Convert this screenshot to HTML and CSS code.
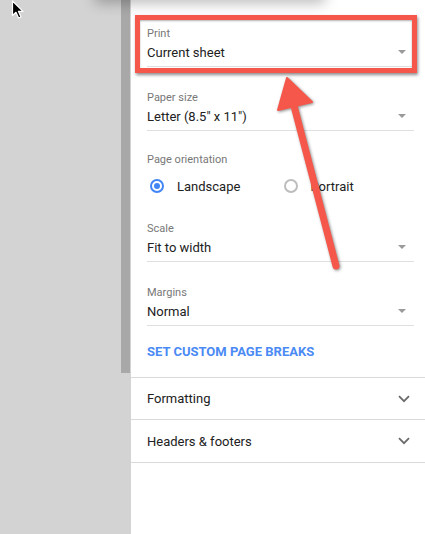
FILE: index.html
```html
<!DOCTYPE html>
<html>
<head>
<meta charset="utf-8">
<link rel="stylesheet" href="styles.css">
</head>
<body>
<div class="screen">
  <div class="sidebar">
    <svg class="cursor" width="14" height="20" viewBox="0 0 14 20"><path d="M1.5 1 L1.5 15.5 L5 12.3 L7.6 18 L10 17 L7.5 11.4 L12 11.4 Z" fill="#000" stroke="#fff" stroke-width="1.2" stroke-linejoin="round"/></svg>
  </div>
  <div class="scrollbar"><div class="thumb"></div></div>
  <main class="panel">
    <div class="options">
      <div class="field">
        <div class="label">Print</div>
        <div class="select"><span>Current sheet</span><span class="caret"></span></div>
      </div>
      <div class="field">
        <div class="label">Paper size</div>
        <div class="select"><span>Letter (8.5" x 11")</span><span class="caret"></span></div>
      </div>
      <div class="field orientation">
        <div class="label">Page orientation</div>
        <div class="radios">
          <label class="radio"><span class="dot checked"></span>Landscape</label>
          <label class="radio"><span class="dot"></span>Portrait</label>
        </div>
      </div>
      <div class="field">
        <div class="label">Scale</div>
        <div class="select"><span>Fit to width</span><span class="caret"></span></div>
      </div>
      <div class="field">
        <div class="label">Margins</div>
        <div class="select"><span>Normal</span><span class="caret"></span></div>
      </div>
      <a class="link">SET CUSTOM PAGE BREAKS</a>
    </div>
    <div class="section"><span>Formatting</span><svg class="chev" width="12" height="8" viewBox="0 0 12 8"><path d="M1 1.2 L6 6.2 L11 1.2" fill="none" stroke="#6b6b6b" stroke-width="1.8"/></svg></div>
    <div class="section"><span>Headers &amp; footers</span><svg class="chev" width="12" height="8" viewBox="0 0 12 8"><path d="M1 1.2 L6 6.2 L11 1.2" fill="none" stroke="#6b6b6b" stroke-width="1.8"/></svg></div>
  </main>
  <div class="card-shadow"></div>
  <div class="highlight"></div>
  <svg class="arrow" width="425" height="534" viewBox="0 0 425 534">
    <line x1="336" y1="266" x2="293" y2="102" stroke="#f5574a" stroke-width="7" stroke-linecap="round"/>
    <polygon points="287,78 312,102 278,110" fill="#f5574a" stroke="#f5574a" stroke-width="2" stroke-linejoin="round"/>
  </svg>
</div>
</body>
</html>
```

FILE: styles.css
```css
html, body {
  margin: 0;
  padding: 0;
}
body {
  width: 425px;
  height: 534px;
  overflow: hidden;
  font-family: Roboto, "Liberation Sans", Arial, sans-serif;
  background: #d3d3d3;
}
.screen {
  position: relative;
  display: flex;
  width: 425px;
  height: 534px;
  overflow: hidden;
}
.sidebar {
  width: 121px;
  flex: none;
  background: #d3d3d3;
}
.cursor {
  display: block;
  margin: 0 0 0 11px;
}
.scrollbar {
  width: 10px;
  flex: none;
  background: #d3d3d3;
}
.thumb {
  width: 9px;
  height: 373px;
  background: #a8a8a8;
}
.panel {
  flex: 1;
  min-width: 0;
  background: #fff;
  display: flex;
  flex-direction: column;
}
.options {
  padding: 27px 11px 0 16px;
}
.field {
  margin-bottom: 24px;
}
.field.orientation {
  margin-top: -2px;
  margin-bottom: 26px;
}
.label {
  font-size: 11px;
  line-height: 14px;
  color: #777;
}
.select {
  margin-top: 1px;
  height: 20px;
  padding-bottom: 4px;
  border-bottom: 1px solid #e0e0e0;
  display: flex;
  align-items: center;
  justify-content: space-between;
  font-size: 13px;
  color: #212121;
}
.caret {
  width: 0;
  height: 0;
  border-left: 4px solid transparent;
  border-right: 4px solid transparent;
  border-top: 4px solid #9a9a9a;
  margin-right: 8px;
}
.radios {
  display: flex;
  margin-top: 9px;
  height: 20px;
}
.radio {
  width: 135px;
  display: flex;
  align-items: center;
  font-size: 13px;
  color: #212121;
}
.dot {
  box-sizing: border-box;
  width: 14px;
  height: 14px;
  margin: 0 13px 0 3px;
  border: 2px solid #bdbdbd;
  border-radius: 50%;
  display: flex;
  align-items: center;
  justify-content: center;
}
.dot.checked {
  border-color: #4285f4;
}
.dot.checked::after {
  content: "";
  width: 6px;
  height: 6px;
  border-radius: 50%;
  background: #4285f4;
}
.link {
  display: block;
  margin-top: -8px;
  line-height: 20px;
  padding-bottom: 15px;
  font-size: 13px;
  font-weight: 700;
  color: #4a8af4;
}
.section {
  height: 41px;
  border-top: 1px solid #dadada;
  display: flex;
  align-items: center;
  justify-content: space-between;
  padding: 0 15px 0 16px;
  font-size: 13px;
  color: #212121;
}
.section + .section {
  height: 42px;
  border-bottom: 1px solid #dadada;
}
.chev {
  display: block;
}
.card-shadow {
  position: absolute;
  left: 95px;
  top: -40px;
  width: 230px;
  height: 40px;
  background: #fff;
  box-shadow: 0 3px 14px rgba(0, 0, 0, 0.28);
}
.highlight {
  position: absolute;
  left: 135px;
  top: 15px;
  width: 272px;
  height: 48px;
  border: 5px solid #f5574a;
  box-shadow: 1px 2px 3px rgba(0, 0, 0, 0.45), inset 0 1px 2px rgba(0, 0, 0, 0.3);
}
.arrow {
  position: absolute;
  left: 0;
  top: 0;
  pointer-events: none;
  filter: drop-shadow(1px 1px 1.5px rgba(0, 0, 0, 0.45));
}
```
